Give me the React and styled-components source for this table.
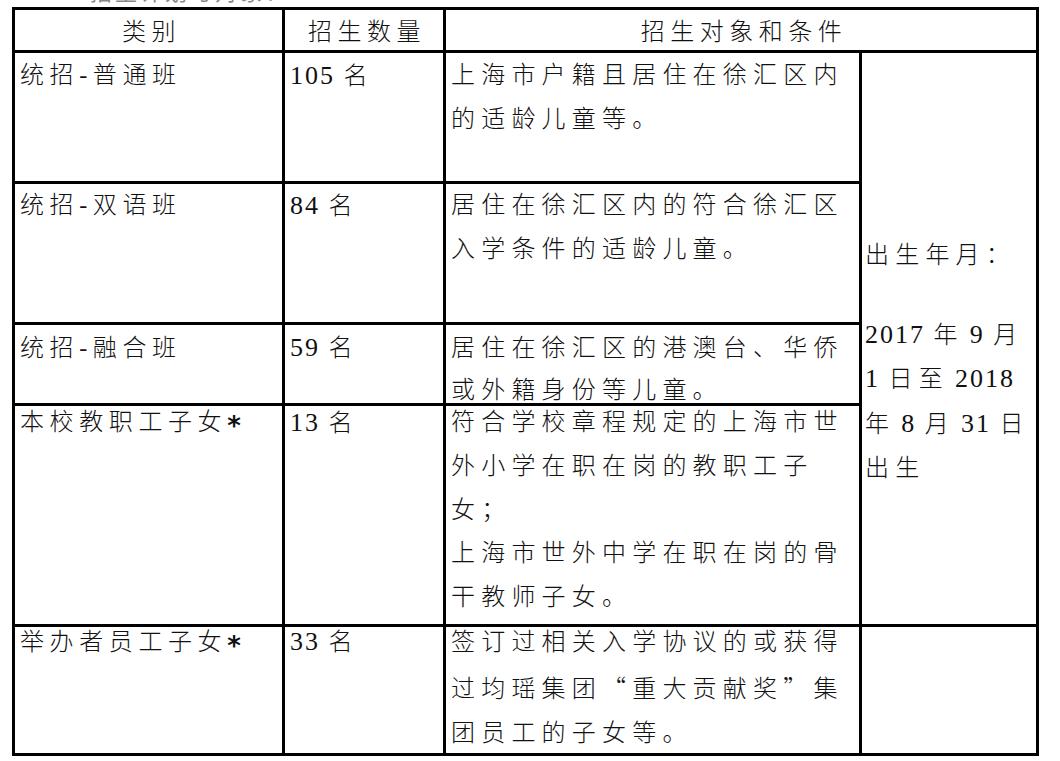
import React from "react";
import styled, { createGlobalStyle } from "styled-components";

const GlobalStyle = createGlobalStyle`
  html, body {
    margin: 0;
    padding: 0;
    background: #fff;
  }
  body {
    font-family: "Liberation Serif", "Noto Sans CJK SC", serif;
    color: #111;
  }
`;

const Page = styled.div`
  width: 1060px;
  height: 761px;
  overflow: hidden;
  padding-left: 12px;
  box-sizing: border-box;
`;

const Caption = styled.div`
  height: 7px;
  overflow: hidden;
  padding-left: 78px;
  font-size: 22px;
  line-height: 22px;
  letter-spacing: 3px;
  color: #888;

  span {
    display: block;
    margin-top: -18px;
  }
`;

const Table = styled.table`
  border-collapse: collapse;
  table-layout: fixed;
  width: 1027px;
  border: 3px solid #000;
  font-family: "Liberation Serif", "Noto Sans CJK SC", serif;
`;

const Row = styled.tr`
  height: ${(p) => p.$h}px;
`;

const HeadCell = styled.th`
  border: 3px solid #000;
  padding: 4px 4px 0 10px;
  font-weight: 300;
  font-size: 24px;
  line-height: 36px;
  letter-spacing: 5.5px;
  text-align: center;
  vertical-align: top;
  white-space: nowrap;
`;

const Cell = styled.td`
  border: 3px solid #000;
  padding: 0 2px 0 5px;
  font-weight: 300;
  font-size: 24px;
  letter-spacing: ${(p) => p.$ls || 6.2}px;
  vertical-align: top;
  white-space: nowrap;
  overflow: hidden;
`;

const NoteCell = styled(Cell)`
  padding: 180px 2px 0 3px;
  line-height: 44.5px;
`;

// fixed-height text block, so the row keeps the height of the scan
const Lines = styled.div`
  display: flow-root;
  height: ${(p) => p.$h}px;
  padding-top: ${(p) => Math.max(p.$shift, 0)}px;
  box-sizing: border-box;
  line-height: ${(p) => p.$lh}px;

  & > div:first-child {
    margin-top: ${(p) => Math.min(p.$shift, 0)}px;
  }
`;

const Line = styled.div``;

const Gap = styled.div`
  height: 35px;
`;

const Num = styled.span`
  font-family: "Liberation Serif", "Times New Roman", "DejaVu Serif", serif;
  font-weight: 400;
  font-size: 26px;
  letter-spacing: 2px;
`;

const Space = styled.span`
  letter-spacing: 0;
`;

const Cjk = styled.span`
  font-family: "Noto Sans CJK SC", sans-serif;
`;

const Star = styled.span`
  font-family: "DejaVu Sans", sans-serif;
  font-weight: bold;
  font-size: 26px;
  vertical-align: -0.18em;
  letter-spacing: 0;
`;

const rows = [
  {
    name: "统招-普通班",
    count: "105 名",
    text: ["上海市户籍且居住在徐汇区内", "的适龄儿童等。"],
    h: 131,
    lh: 43.5,
    shift: 1,
  },
  {
    name: "统招-双语班",
    count: "84 名",
    text: ["居住在徐汇区内的符合徐汇区", "入学条件的适龄儿童。"],
    h: 141,
    lh: 43.5,
    shift: 0,
  },
  {
    name: "统招-融合班",
    count: "59 名",
    text: ["居住在徐汇区的港澳台、华侨", "或外籍身份等儿童。"],
    h: 81,
    lh: 42,
    shift: 2,
  },
  {
    name: "本校教职工子女*",
    count: "13 名",
    text: [
      "符合学校章程规定的上海市世",
      "外小学在职在岗的教职工子",
      "女；",
      "上海市世外中学在职在岗的骨",
      "干教师子女。",
    ],
    h: 221,
    lh: 43.8,
    shift: -5,
  },
  {
    name: "举办者员工子女*",
    count: "33 名",
    text: ["签订过相关入学协议的或获得", "过均瑶集团“重大贡献奖”集", "团员工的子女等。"],
    h: 129,
    lh: 44.5,
    shift: -7,
  },
];

const birth = ["2017 年 9 月", "1 日至 2018", "年 8 月 31 日", "出生"];

// digits (with the space after them) keep a tighter spacing,
// a space before digits gets none, quotes come from the CJK face
function fmt(str) {
  return str.split(/( ?\d+ ?|[“”]|\*)/).map((part, i) => {
    const m = part.match(/^( ?)(\d+ ?)$/);
    if (m)
      return (
        <React.Fragment key={i}>
          {m[1] && <Space> </Space>}
          <Num>{m[2]}</Num>
        </React.Fragment>
      );
    if (part === "“" || part === "”") return <Cjk key={i}>{part}</Cjk>;
    if (part === "*") return <Star key={i}>*</Star>;
    return part;
  });
}

function App() {
  return (
    <Page>
      <GlobalStyle />
      <Caption>
        <span>招生计划与对象：</span>
      </Caption>
      <Table>
        <colgroup>
          <col style={{ width: 270 }} />
          <col style={{ width: 161 }} />
          <col style={{ width: 416 }} />
          <col style={{ width: 177 }} />
        </colgroup>
        <thead>
          <Row $h={43}>
            <HeadCell>类别</HeadCell>
            <HeadCell>招生数量</HeadCell>
            <HeadCell colSpan={2}>招生对象和条件</HeadCell>
          </Row>
        </thead>
        <tbody>
          {rows.map((r, idx) => {
            const box = { $h: r.h - 3, $lh: r.lh, $shift: r.shift };
            return (
              <Row key={r.name} $h={r.h}>
                <Cell $ls={5.6}>
                  <Lines {...box}>
                    <Line>{fmt(r.name)}</Line>
                  </Lines>
                </Cell>
                <Cell>
                  <Lines {...box}>
                    <Line>{fmt(r.count)}</Line>
                  </Lines>
                </Cell>
                <Cell>
                  <Lines {...box}>
                    {r.text.map((t) => (
                      <Line key={t}>{fmt(t)}</Line>
                    ))}
                  </Lines>
                </Cell>
                {idx === 0 && (
                  <NoteCell rowSpan={4}>
                    <Line>出生年月：</Line>
                    <Gap />
                    {birth.map((t) => (
                      <Line key={t}>{fmt(t)}</Line>
                    ))}
                  </NoteCell>
                )}
                {idx === 4 && <Cell />}
              </Row>
            );
          })}
        </tbody>
      </Table>
    </Page>
  );
}

export default App;
